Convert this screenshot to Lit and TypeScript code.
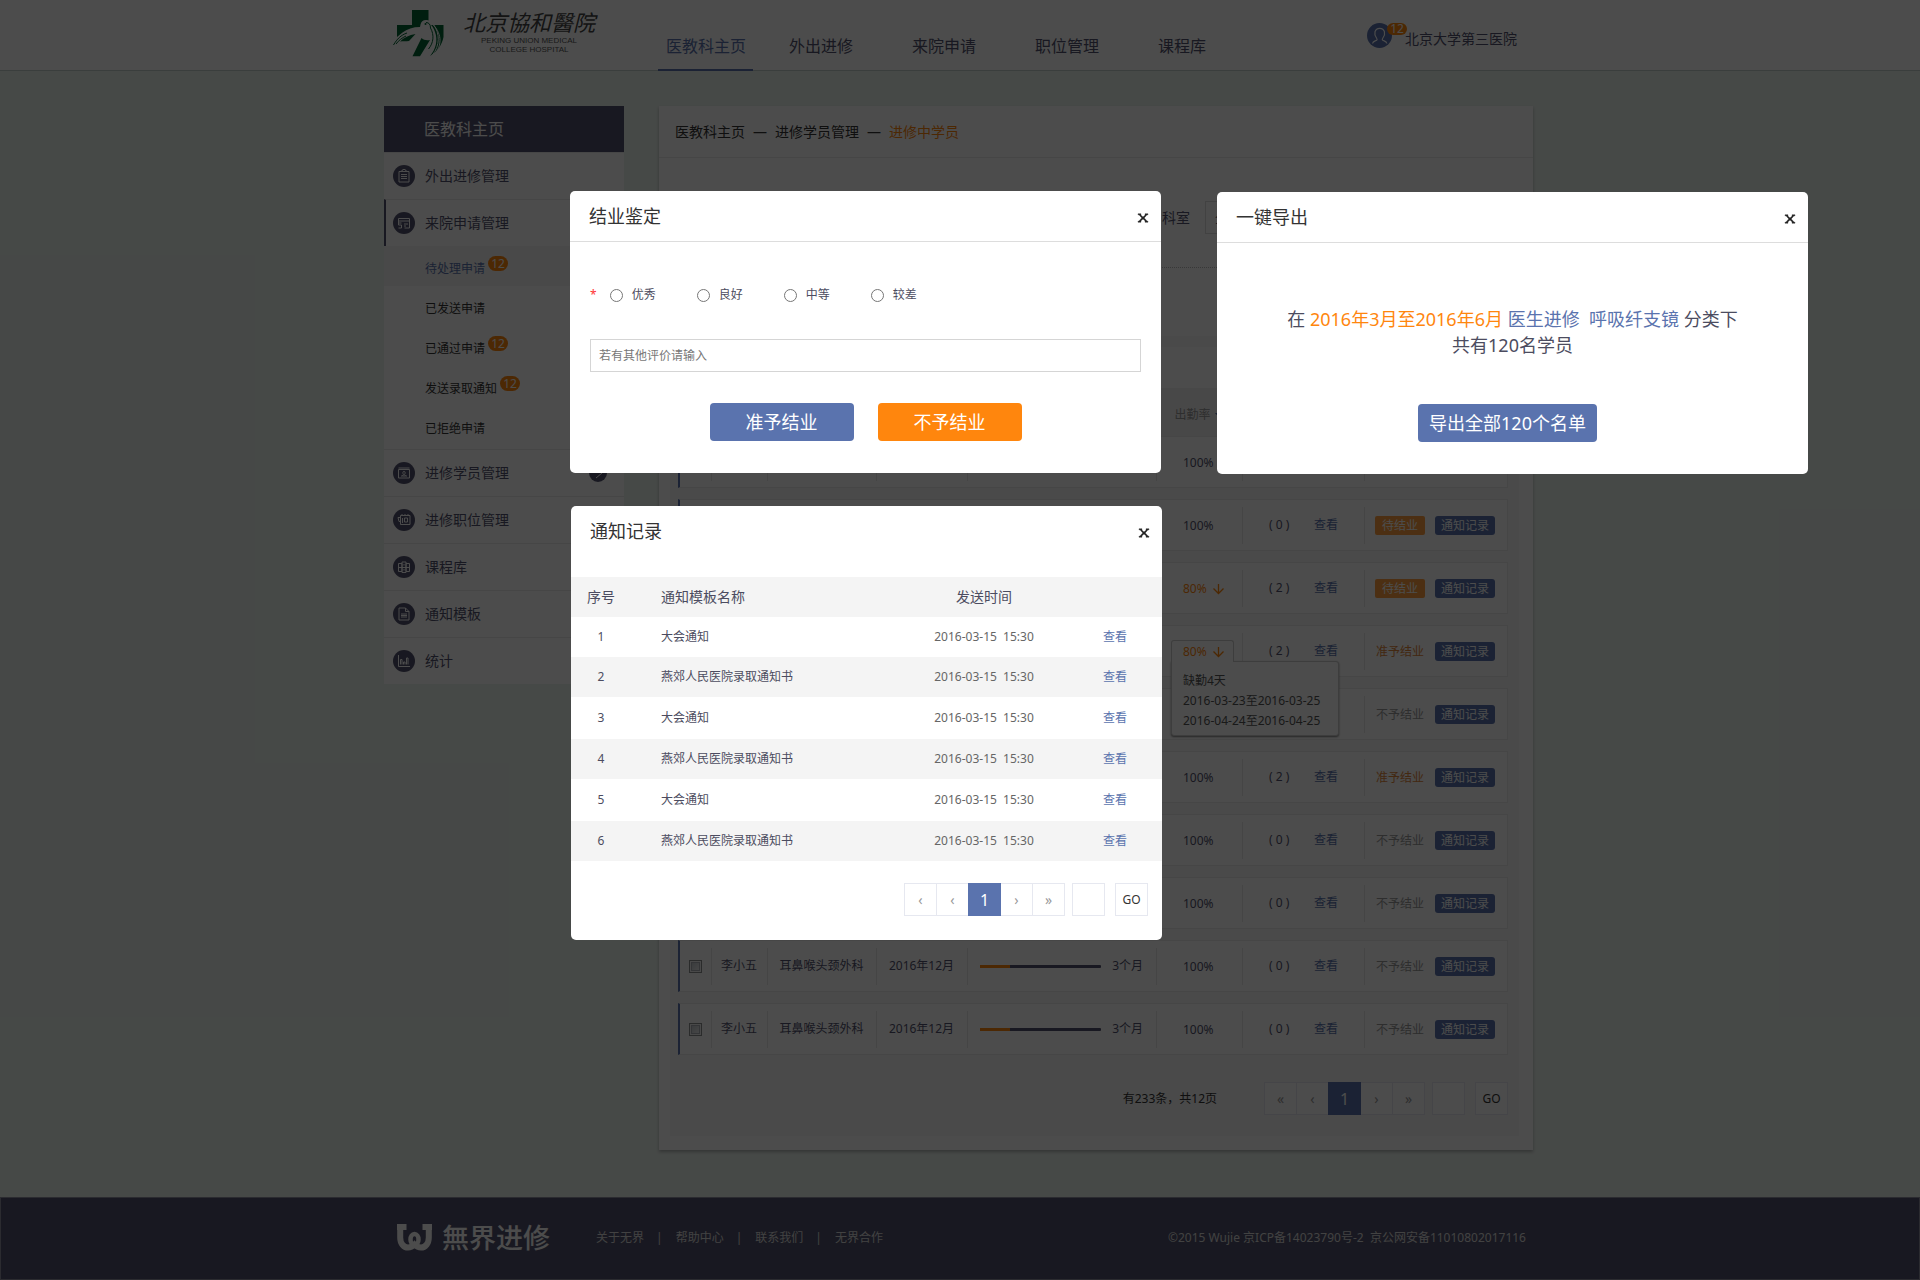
import { LitElement, html, css, svg, nothing } from "lit";
import { customElement, property } from "lit/decorators.js";
import { classMap } from "lit/directives/class-map.js";
import { styleMap } from "lit/directives/style-map.js";

const base = css`
  * {
    box-sizing: border-box;
  }
  button,
  input,
  select {
    font: inherit;
    color: inherit;
    margin: 0;
    padding: 0;
    border: 0;
    background: none;
    border-radius: 0;
  }
  button {
    cursor: pointer;
  }
  a {
    color: inherit;
    text-decoration: none;
  }
  ul,
  ol {
    list-style: none;
    margin: 0;
    padding: 0;
  }
  h1,
  h2,
  p {
    margin: 0;
    font-weight: 400;
  }
`;

/* ---------- Pagination ---------- */

@customElement("page-pager")
export class PagePager extends LitElement {
  @property() first = "«";

  static styles = [
    base,
    css`
      :host {
        display: flex;
        align-items: center;
        font-size: 12px;
        line-height: 16px;
        color: #333;
      }
      .steps {
        display: flex;
        margin-right: 7px;
      }
      .step,
      .page,
      .go {
        width: 33px;
        height: 33px;
        border: 1px solid #e6e8f0;
        background: #fff;
        text-align: center;
      }
      .step {
        font-size: 14px;
        color: #999;
      }
      .step + .step {
        margin-left: -1px;
      }
      .current {
        position: relative;
        background: #5a73ae;
        border-color: #5a73ae;
        color: #fff;
        font-size: 16px;
      }
      .page {
        margin-right: 10px;
      }
    `,
  ];

  render() {
    return html`
      <div class="steps">
        <button class="step" aria-label="首页">${this.first}</button>
        <button class="step" aria-label="上一页">‹</button>
        <button class="step current" aria-current="page">1</button>
        <button class="step" aria-label="下一页">›</button>
        <button class="step" aria-label="末页">»</button>
      </div>
      <input class="page" type="text" aria-label="页码" />
      <button class="go">GO</button>
    `;
  }
}

/* ---------- Dialog frame ---------- */

@customElement("dialog-box")
export class DialogBox extends LitElement {
  @property() heading = "";
  @property({ type: Boolean }) ruled = false;

  static styles = [
    base,
    css`
      :host {
        display: block;
        background: #fff;
        border-radius: 5px;
        color: #4c4c60;
      }
      .head {
        display: flex;
        align-items: center;
        justify-content: space-between;
        height: 51px;
        padding: 0 12px 0 19px;
        border-bottom: 1px solid transparent;
      }
      .ruled {
        border-color: #ddd;
      }
      .title {
        font-size: 18px;
        line-height: 26px;
        color: #333;
      }
      .close {
        display: flex;
        padding: 8px 0 5px;
      }
    `,
  ];

  render() {
    return html`
      <div class=${classMap({ head: true, ruled: this.ruled })}>
        <h2 class="title">${this.heading}</h2>
        <button class="close" aria-label="关闭">
          <svg width="12" height="10" viewBox="0 0 12 10">
            <path d="M1 .8h3v1h-.5L6 4l2.500-2.200H8v-1h3v1h-1L7.200 4.900 10.200 8.200H11v1H8v-1h.5L6 5.900 3.500 8.200H4v1H1v-1h.8L4.800 4.900 2 1.800H1z" fill="#222" stroke="#222" stroke-width=".4" />
          </svg>
        </button>
      </div>
      <slot></slot>
    `;
  }
}

/* ---------- Data ---------- */

const NAV = ["医教科主页", "外出进修", "来院申请", "职位管理", "课程库"];

const SUBMENU: { label: string; count?: number }[] = [
  { label: "待处理申请", count: 12 },
  { label: "已发送申请" },
  { label: "已通过申请", count: 12 },
  { label: "发送录取通知", count: 12 },
  { label: "已拒绝申请" },
];

const ICONS = {
  clipboard: svg`<path d="M6 6.500h10v10.500H6zM9 6.500V5h1l1-1 1 1h1v1.500M8 9.500h6M8 11.500h6M8 13.500h6" />`,
  apply: svg`<path d="M5.500 12V6.500h11v9.500h-5M5.500 9h11M8.500 11h-3v2h3v3h-3M11 12h4M11 14h2" />`,
  person: svg`<path d="M5.500 7.500h11v8.500h-11zM5.500 6h11M9.500 14c0-1 1-1 1-1.600-1-1-.8-3 .5-3s1.500 2 .5 3c0 .6 1 .6 1 1.600zM8 14h1.500M12.500 14H14" />`,
  post: svg`<path d="M7.500 6.500h9.500v9h-9.500zM7.500 8.500H5l1 4h1.500M9.500 9v5M11.500 9h3v4h-3zM9 5v1.500M12 5v1.500M15 5v1.500" />`,
  course: svg`<path d="M5.500 7.500h3.500v8h-3.500zM9 6h4v10.500H9zM13 7.500h3.500v8H13zM5.500 11.500h11M11 8v1.500M11 13v1.500" />`,
  template: svg`<path d="M6 5h6.500l3.500 3.500V17H6zM12.500 5v3.500H16M8 11h6M8 12.500h6M8 14h6" />`,
  stats: svg`<path d="M5.500 5v11.500H17M7.500 14.500v-5h1.500v5M10.500 14.500v-2.500H12v2.500M13.500 14.500V8H15v6.500" />`,
};

type Status = "pending" | "granted" | "denied";
interface Trainee {
  rate: string;
  low?: boolean;
  tip?: boolean;
  notes: number;
  status: Status;
}

const TRAINEES: Trainee[] = [
  { rate: "100%", notes: 0, status: "pending" },
  { rate: "100%", notes: 0, status: "pending" },
  { rate: "80%", low: true, notes: 2, status: "pending" },
  { rate: "80%", low: true, tip: true, notes: 2, status: "granted" },
  { rate: "100%", notes: 0, status: "denied" },
  { rate: "100%", notes: 2, status: "granted" },
  { rate: "100%", notes: 0, status: "denied" },
  { rate: "100%", notes: 0, status: "denied" },
  { rate: "100%", notes: 0, status: "denied" },
  { rate: "100%", notes: 0, status: "denied" },
];

const STATUS_TEXT: Record<Status, string> = {
  pending: "待结业",
  granted: "准予结业",
  denied: "不予结业",
};

const NOTICES = ["大会通知", "燕郊人民医院录取通知书", "大会通知", "燕郊人民医院录取通知书", "大会通知", "燕郊人民医院录取通知书"];

/* ---------- Page ---------- */

@customElement("app-root")
export class AppRoot extends LitElement {
  static styles = [
    base,
    css`
      :host {
        position: relative;
        display: flex;
        flex-direction: column;
        min-height: 100vh;
        background: #ebf3ee;
        font-family: "Noto Sans", "Noto Sans CJK SC", sans-serif;
        font-size: 12px;
        line-height: 18px;
        color: #53536e;
      }
      .wrap {
        width: 100%;
        max-width: 1152px;
        margin: 0 auto;
        padding-right: 3px;
      }

      /* Top bar */
      .top {
        background: #fff;
        border-bottom: 1px solid #c4cfcc;
      }
      .top .wrap {
        display: flex;
        height: 70px;
      }
      .brand {
        display: flex;
        gap: 19px;
        width: 274px;
        padding: 9px 0 0 9px;
      }
      .brand-words {
        display: block;
        text-align: center;
      }
      .brand-cn {
        display: block;
        font-size: 22px;
        line-height: 27px;
        font-style: italic;
        color: #444;
      }
      .brand-en {
        display: block;
        font-family: "Liberation Sans", sans-serif;
        font-size: 8px;
        line-height: 9px;
        color: #555;
      }
      .nav {
        display: grid;
        grid-template-columns: repeat(5, 123px);
        justify-items: start;
        font-size: 16px;
      }
      .nav-link {
        display: flex;
        height: 71px;
        padding: 23px 7px 0 8px;
        line-height: 46px;
        border-bottom: 2px solid transparent;
      }
      .nav-link.active {
        color: #5a73ae;
        border-color: #5a73ae;
      }
      .user {
        display: flex;
        align-items: flex-start;
        margin-left: auto;
        padding: 23px 16px 0 0;
      }
      .user-name {
        margin-left: -2px;
        padding-top: 6px;
        font-size: 14px;
        line-height: 20px;
      }
      .badge {
        min-width: 20px;
        height: 15px;
        border-radius: 8px;
        background: #ff860d;
        color: #fff;
        font-size: 12px;
        line-height: 15px;
        text-align: center;
      }
      .user .badge {
        margin-left: -5px;
        height: 12px;
        line-height: 12px;
      }

      /* Body */
      .body {
        display: flex;
        align-items: flex-start;
        gap: 35px;
        padding-top: 35px;
        padding-bottom: 47px;
      }
      .side {
        flex: 0 0 240px;
        background: #fff;
      }
      .side-title {
        padding: 0 40px;
        background: #53536e;
        color: #fff;
        font-size: 16px;
        line-height: 46px;
      }
      .side-link {
        display: flex;
        align-items: center;
        gap: 10px;
        height: 47px;
        padding: 0 17px 0 9px;
        font-size: 14px;
        border-top: 1px solid #e9e9e9;
      }
      .side-link.open {
        border-left: 2px solid #53536e;
        padding-left: 7px;
      }
      .side-more {
        margin-left: auto;
      }
      .disc {
        display: block;
        flex: none;
      }
      .sub-link {
        display: flex;
        gap: 3px;
        height: 40px;
        padding-left: 41px;
        line-height: 46px;
        color: #333;
      }
      .sub-link .badge {
        margin-top: 10px;
      }
      .sub-link.active {
        background: #f3f3f3;
        color: #5a73ae;
      }
      .sub {
        padding-bottom: 3px;
      }

      .main {
        flex: 1;
        min-width: 0;
        background: #fff;
        padding-bottom: 14px;
        box-shadow: 0 2px 3px rgba(0, 0, 0, 0.25);
      }
      .crumbs {
        display: flex;
        gap: 8px;
        padding: 0 16px;
        border-bottom: 1px solid #e9e9e9;
        color: #333;
        font-size: 14px;
        line-height: 52px;
        height: 52px;
      }
      .crumbs .here {
        color: #ff860d;
      }
      .filters {
        display: flex;
        justify-content: flex-end;
        align-items: center;
        gap: 15px;
        padding: 43px 28px 33px;
        border-bottom: 1px dotted #bbb;
        font-size: 14px;
      }
      .dept {
        appearance: none;
        width: 300px;
        height: 33px;
        padding: 0 9px;
        border: 1px solid #ddd;
      }
      .panel {
        margin: 68px 14px 0 11px;
        padding: 11px 11px 21px 8px;
        background: #f7f7f7;
      }
      .strip {
        height: 41px;
        background: #fff;
      }

      .roster,
      .roster thead {
        display: block;
      }
      .roster tbody {
        display: flex;
        flex-direction: column;
        gap: 11px;
      }
      .roster tr {
        display: grid;
        grid-template-columns: 31px 56fr 109fr 91fr 189fr 86fr 122fr 143fr;
        border: 1px solid #ebebeb;
        border-left: 2px solid #5a73ae;
        background: #fff;
      }
      .roster thead tr {
        height: 48px;
        background: #f1f1f1;
        border-color: #f1f1f1;
        color: #999;
      }
      .roster th {
        display: flex;
        align-items: center;
        justify-content: center;
        gap: 4px;
        padding: 6px 0 0;
        font-weight: 400;
      }
      .roster td {
        position: relative;
        display: flex;
        align-items: center;
        justify-content: center;
        height: 50px;
        padding: 0;
      }
      .roster td + td {
        background: linear-gradient(#e6e6e6, #e6e6e6) 0 50% / 1px 37px no-repeat;
      }
      .tick {
        appearance: none;
        width: 13px;
        height: 13px;
        border: 1px solid #8e8f8f;
        background: linear-gradient(135deg, #b8bec4, #f6f6f6);
        box-shadow: inset 0 0 0 1px #f4f4f4, inset 0 0 0 2px #aeb3b9;
      }
      .roster .term {
        justify-content: flex-start;
        gap: 11px;
        padding: 0 13px;
      }
      .track {
        flex: 1;
        height: 3px;
        border-radius: 1px;
        background: #53536e;
      }
      .done {
        height: 3px;
        background: #ff860d;
      }
      .roster .attend {
        justify-content: flex-start;
        padding-left: 15px;
      }
      .rate {
        position: relative;
        display: flex;
        align-items: center;
        gap: 5px;
        height: 22px;
        padding: 0 8px 0 11px;
        border: 1px solid transparent;
        border-bottom: 0;
      }
      .low {
        color: #ff860d;
      }
      .tabbed {
        z-index: 2;
        background: #fff;
        border-color: #ccc;
        border-radius: 3px 3px 0 0;
      }
      .tip {
        position: absolute;
        z-index: 1;
        top: 35px;
        left: 15px;
        min-width: 168px;
        padding: 9px 11px 4px;
        border: 1px solid #ccc;
        border-radius: 0 3px 3px 3px;
        background: #fff;
        box-shadow: 0 1px 2px rgba(0, 0, 0, 0.5);
        color: #555;
        line-height: 20px;
        white-space: nowrap;
      }
      .roster .notes {
        justify-content: flex-start;
        padding-left: 27px;
      }
      .count {
        width: 45px;
      }
      .look {
        color: #5a73ae;
      }
      .roster .ops {
        justify-content: flex-start;
        gap: 10px;
        padding-left: 11px;
      }
      .status {
        width: 50px;
        text-align: center;
        line-height: 19px;
      }
      .pending {
        border-radius: 2px;
        background: #ff9f40;
        color: #fff;
      }
      .granted {
        color: #e0863a;
      }
      .denied {
        color: #999;
      }
      .record {
        width: 60px;
        height: 19px;
        border-radius: 3px;
        background: #5a73ae;
        color: #fff;
        line-height: 19px;
      }
      .total {
        display: flex;
        justify-content: flex-end;
        align-items: center;
        gap: 47px;
        padding-top: 27px;
        color: #333;
      }

      /* Footer */
      .foot {
        margin-top: auto;
        background: #53536e;
        border: 1px solid #8f8fa0;
        color: #ddd;
      }
      .foot .wrap {
        display: flex;
        align-items: center;
        height: 81px;
        padding: 0 10px 2px 13px;
      }
      .foot-name {
        margin-left: 10px;
        font-size: 27px;
        line-height: 32px;
        font-weight: 500;
        color: #fff;
      }
      .foot-links {
        display: flex;
        margin-left: 46px;
      }
      .foot-links li + li::before {
        content: "|";
        margin: 0 13px 0 12px;
      }
      .rights {
        margin-left: auto;
      }

      /* Floating windows */
      .shade {
        position: absolute;
        inset: 0;
        z-index: 5;
        background: rgba(0, 0, 0, 0.7);
      }
      .win {
        position: absolute;
        z-index: 6;
        width: 591px;
      }
      .win-grade {
        top: 191px;
        left: calc(50% - 390px);
      }
      .win-export {
        top: 192px;
        left: calc(50% + 257px);
      }
      .win-log {
        top: 506px;
        left: calc(50% - 389px);
      }
      .grade {
        display: flex;
        flex-direction: column;
        padding: 44px 20px 32px;
      }
      .choices {
        display: flex;
        align-items: center;
        gap: 41px;
        margin: 0;
        padding: 0;
        border: 0;
      }
      .must {
        margin-right: -28px;
        color: #f33;
      }
      .choice {
        display: flex;
        align-items: center;
        gap: 9px;
      }
      .choice input {
        width: 13px;
        height: 13px;
      }
      .remark {
        height: 33px;
        margin-top: 35px;
        padding: 0 8px;
        border: 1px solid #d5d5d5;
      }
      .remark::placeholder {
        color: #777;
        opacity: 1;
      }
      .actions {
        display: flex;
        justify-content: center;
        gap: 24px;
        margin-top: 31px;
      }
      .big {
        min-width: 144px;
        height: 38px;
        padding: 0 11px;
        border-radius: 4px;
        background: #5a73ae;
        color: #fff;
        font-size: 18px;
        line-height: 36px;
      }
      .warn {
        background: #ff860d;
      }
      .export {
        padding: 63px 10px 32px 0;
        text-align: center;
      }
      .export-text {
        padding-left: 10px;
        font-size: 18px;
        line-height: 26px;
      }
      .orange {
        color: #ff860d;
      }
      .export .actions {
        margin-top: 46px;
      }
      .log {
        width: 100%;
        margin-top: 20px;
        border-collapse: collapse;
        table-layout: fixed;
      }
      .log th {
        height: 40px;
        padding: 0;
        font-size: 14px;
        font-weight: 400;
      }
      .log td {
        height: 42px;
        padding: 0;
        text-align: center;
      }
      .log thead tr,
      .log tbody tr:nth-child(even) {
        background: #f4f4f4;
      }
      .log tbody tr:first-child td,
      .log tbody tr:nth-child(even) td {
        height: 40px;
      }
      .log .c-no {
        width: 60px;
      }
      .log .c-name {
        width: 240px;
        padding-left: 30px;
        text-align: left;
      }
      .log .c-time {
        width: 226px;
      }
      .log td.c-time {
        color: #666;
      }
      .log .c-look {
        padding-left: 6px;
        text-align: left;
      }
      .log-foot {
        display: flex;
        justify-content: flex-end;
        padding: 22px 14px 24px;
      }
    `,
  ];

  private disc(icon: unknown) {
    return html`<svg class="disc" width="22" height="22" viewBox="0 0 22 22" aria-hidden="true">
      <circle cx="11" cy="11" r="11" fill="#53536e" />
      <g fill="none" stroke="#fff" stroke-width="1">${icon}</g>
    </svg>`;
  }

  private sideLink(icon: unknown, label: string, opts: { open?: boolean; more?: boolean } = {}) {
    return html`<a class=${classMap({ "side-link": true, open: !!opts.open })} href="#">
      ${this.disc(icon)}<span>${label}</span>
      ${opts.more
        ? html`<svg class="side-more" width="18" height="18" viewBox="0 0 18 18" aria-hidden="true">
            <circle cx="9" cy="9" r="9" fill="#53536e" />
            <path d="M7 4l6 5-6 5" fill="none" stroke="#fff" />
          </svg>`
        : nothing}
    </a>`;
  }

  private header() {
    return html`<header class="top">
      <div class="wrap">
        <a class="brand" href="#">
          <svg width="51" height="48" viewBox="0 0 51 48" aria-hidden="true">
            <g fill="#006633">
              <path d="M19 1h16.500v10.500C31.500 10 28 12 27.500 15.500l-.5 2.500C20 18 14 20 9.500 23.500L4 28V16h15z" />
              <path d="M38 16h12.500v12C49 36 44 43 37 47c6-7 8-16 5-24-1-3-2.300-5.500-4-7z" />
              <path d="M28.500 29c2 2 5 2.700 8.500 2L27 47.300h-7.500z" />
              <path d="M7 32.500c4-4 9-6.500 15.500-7.500L16 32c-3 .5-6 .2-9 .5z" />
            </g>
            <g fill="none">
              <path d="M.5 36C4 30 8 26 14 24M3 35c3-4 6-6 10-8" stroke="#006633" />
              <path d="M40.500 15.500c6.500 9 6.500 21-1 30.500M37 13c10 8 14 20 5 32" stroke="#fff" />
              <path d="M33 13.500c3 0 4.500 2 4.500 5.500 4 7 3 15-2 21" stroke="#006633" />
            </g>
            <circle cx="32.500" cy="15" r="1" fill="#006633" />
          </svg>
          <span class="brand-words">
            <span class="brand-cn">北京協和醫院</span>
            <span class="brand-en">PEKING UNION MEDICAL</span>
            <span class="brand-en">COLLEGE HOSPITAL</span>
          </span>
        </a>
        <nav class="nav">
          ${NAV.map((n, i) => html`<a class=${classMap({ "nav-link": true, active: i === 0 })} href="#">${n}</a>`)}
        </nav>
        <div class="user">
          <svg width="25" height="25" viewBox="0 0 25 25" aria-hidden="true">
            <circle cx="12.500" cy="12.500" r="12.500" fill="#5a73ae" />
            <path
              d="M5.500 20.500c.5-2.500 2.500-2.300 4.200-3.300.8-.6.400-1.400-.2-2.200C6.500 11 7.500 5.300 12.700 5.300S19 11 15.900 15c-.6.800-1 1.600-.2 2.200 1.700 1 3.700.8 4.200 3.300"
              fill="none" stroke="#fff" stroke-width="1.200" />
          </svg>
          <span class="badge">12</span>
          <a class="user-name" href="#">北京大学第三医院</a>
        </div>
      </div>
    </header>`;
  }

  private sidebar() {
    return html`<aside class="side">
      <h1 class="side-title">医教科主页</h1>
      ${this.sideLink(ICONS.clipboard, "外出进修管理")}
      ${this.sideLink(ICONS.apply, "来院申请管理", { open: true })}
      <ul class="sub">
        ${SUBMENU.map(
          (s, i) => html`<li>
            <a class=${classMap({ "sub-link": true, active: i === 0 })} href="#">
              <span>${s.label}</span>${s.count ? html`<span class="badge">${s.count}</span>` : nothing}
            </a>
          </li>`
        )}
      </ul>
      ${this.sideLink(ICONS.person, "进修学员管理", { more: true })}
      ${this.sideLink(ICONS.post, "进修职位管理")}
      ${this.sideLink(ICONS.course, "课程库")}
      ${this.sideLink(ICONS.template, "通知模板")}
      ${this.sideLink(ICONS.stats, "统计")}
    </aside>`;
  }

  private trainee(t: Trainee) {
    return html`<tr>
      <td><input class="tick" type="checkbox" aria-label="选择李小五" /></td>
      <td>李小五</td>
      <td>耳鼻喉头颈外科</td>
      <td>2016年12月</td>
      <td class="term">
        <div class="track"><div class="done" style=${styleMap({ width: "25%" })}></div></div>
        3个月
      </td>
      <td class="attend">
        <span class=${classMap({ rate: true, low: !!t.low, tabbed: !!t.tip })}>
          ${t.rate}
          ${t.low
            ? html`<svg width="13" height="12" viewBox="0 0 13 12" aria-hidden="true">
                <path d="M6.500 1v9.500M1.500 5.500l5 5 5-5" fill="none" stroke="#ff860d" stroke-width="1.300" />
              </svg>`
            : nothing}
        </span>
        ${t.tip
          ? html`<div class="tip" role="tooltip">缺勤4天<br />2016-03-23至2016-03-25<br />2016-04-24至2016-04-25</div>`
          : nothing}
      </td>
      <td class="notes"><span class="count">( ${t.notes} )</span><a class="look" href="#">查看</a></td>
      <td class="ops">
        <span class="status ${t.status}">${STATUS_TEXT[t.status]}</span>
        <button class="record">通知记录</button>
      </td>
    </tr>`;
  }

  private content() {
    return html`<main class="main">
      <nav class="crumbs">
        <a href="#">医教科主页</a><span>—</span><a href="#">进修学员管理</a><span>—</span><a class="here" href="#">进修中学员</a>
      </nav>
      <div class="filters">
        <label for="dept">科室</label>
        <select id="dept" class="dept">
          <option>全部</option>
        </select>
      </div>
      <section class="panel">
        <div class="strip"></div>
        <table class="roster">
          <thead>
            <tr>
              <th></th>
              <th>姓名</th>
              <th>科室</th>
              <th>开始时间</th>
              <th>进修时长</th>
              <th>
                出勤率
                <svg width="9" height="6" viewBox="0 0 9 6" aria-hidden="true"><path d="M0 1h9L4.500 6z" fill="#5a73ae" /></svg>
              </th>
              <th>评价</th>
              <th>操作</th>
            </tr>
          </thead>
          <tbody>
            ${TRAINEES.map((t) => this.trainee(t))}
          </tbody>
        </table>
        <div class="total"><span>有233条，共12页</span><page-pager></page-pager></div>
      </section>
    </main>`;
  }

  private footer() {
    return html`<footer class="foot">
      <div class="wrap">
        <svg width="35" height="27" viewBox="0 0 35 27" aria-hidden="true">
          <g fill="none" stroke="#fff">
            <path d="M3.200 3v10.500c0 6 3.500 10 7.800 10 3 0 5-1.500 6.500-3 1.500 1.500 3.500 3 6.500 3 4.300 0 7.800-4 7.800-10V3" stroke-width="6" />
            <ellipse cx="17.500" cy="15.500" rx="4" ry="5.500" stroke-width="4.500" />
          </g>
          <path d="M0 0h9.500v6H0zM25.500 0H35v6h-9.500z" fill="#fff" />
        </svg>
        <span class="foot-name">無界进修</span>
        <ul class="foot-links">
          ${["关于无界", "帮助中心", "联系我们", "无界合作"].map((l) => html`<li><a href="#">${l}</a></li>`)}
        </ul>
        <span class="rights">©2015 Wujie 京ICP备14023790号-2 &nbsp;京公网安备11010802017116</span>
      </div>
    </footer>`;
  }

  private windows() {
    return html`
      <dialog-box class="win win-grade" role="dialog" aria-label="结业鉴定" heading="结业鉴定" ruled>
        <form class="grade">
          <fieldset class="choices">
            <span class="must">*</span>
            ${["优秀", "良好", "中等", "较差"].map(
              (c) => html`<label class="choice"><input type="radio" name="grade" value=${c} />${c}</label>`
            )}
          </fieldset>
          <input class="remark" type="text" aria-label="其他评价" placeholder="若有其他评价请输入" />
          <div class="actions">
            <button class="big" type="button">准予结业</button>
            <button class="big warn" type="button">不予结业</button>
          </div>
        </form>
      </dialog-box>

      <dialog-box class="win win-export" role="dialog" aria-label="一键导出" heading="一键导出" ruled>
        <div class="export">
          <p class="export-text">
            在 <span class="orange">2016年3月至2016年6月</span> <span class="look">医生进修 &nbsp;呼吸纤支镜</span> 分类下<br />共有120名学员
          </p>
          <div class="actions"><button class="big">导出全部120个名单</button></div>
        </div>
      </dialog-box>

      <dialog-box class="win win-log" role="dialog" aria-label="通知记录" heading="通知记录">
        <table class="log">
          <thead>
            <tr>
              <th class="c-no">序号</th>
              <th class="c-name">通知模板名称</th>
              <th class="c-time">发送时间</th>
              <th class="c-look"></th>
            </tr>
          </thead>
          <tbody>
            ${NOTICES.map(
              (n, i) => html`<tr>
                <td class="c-no">${i + 1}</td>
                <td class="c-name">${n}</td>
                <td class="c-time">2016-03-15 &nbsp;15:30</td>
                <td class="c-look"><a class="look" href="#">查看</a></td>
              </tr>`
            )}
          </tbody>
        </table>
        <div class="log-foot"><page-pager first="‹"></page-pager></div>
      </dialog-box>
    `;
  }

  render() {
    return html`
      ${this.header()}
      <div class="wrap body">${this.sidebar()}${this.content()}</div>
      ${this.footer()}
      <div class="shade"></div>
      ${this.windows()}
    `;
  }
}
